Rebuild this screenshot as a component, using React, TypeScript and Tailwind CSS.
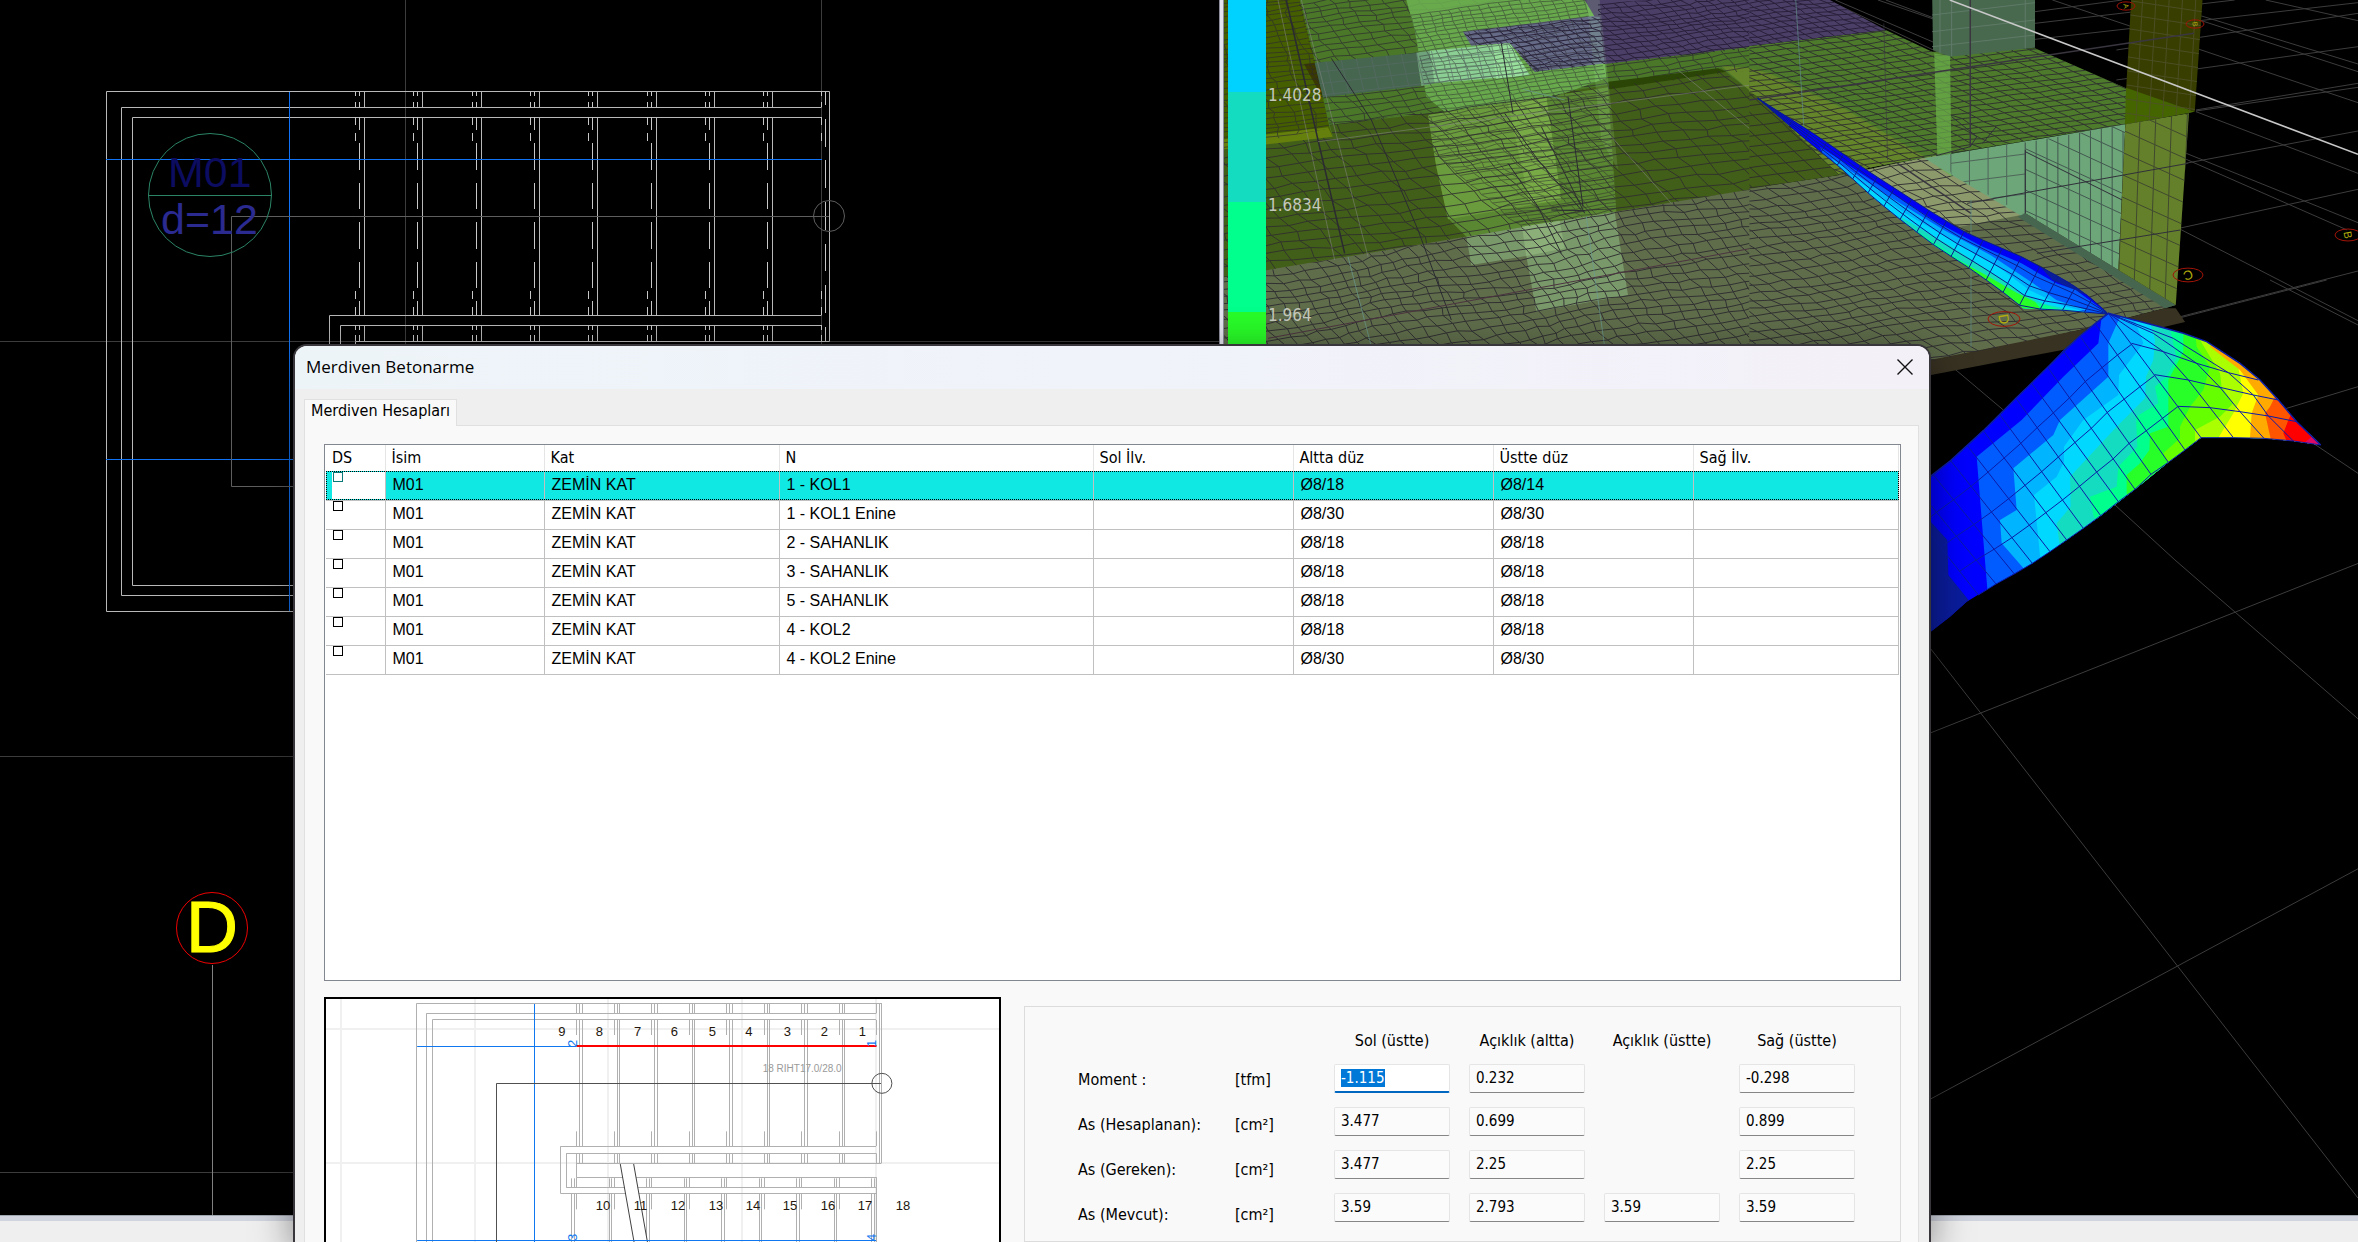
import { useEffect, useRef } from "react";

type Pt = [number, number];

const NEAR = "translate(1218 0) scale(0.33333)";
const FAR = "translate(1750 0) scale(0.38776 0.33333)";
const FLIGHT = "translate(1900 280) scale(0.33333)";
const OPEN = "translate(1910 560) scale(0.33333 0.43495)";

const noise = (a: number, b: number) => {
  const s = Math.sin(a * 127.1 + b * 311.7) * 43758.5453;
  return s - Math.floor(s) - 0.5;
};

type MeshProps = {
  id: string;
  clip: string;
  origin: Pt;
  u: Pt;
  v: Pt;
  nu: number;
  nv: number;
  jitter?: number;
  wave?: number;
  color?: string;
  opacity?: number;
};

/* Finite element grid spanned by two step vectors and cut to a polygon. */
function Mesh({ id, clip, origin, u, v, nu, nv, jitter = 0, wave = 0, color = "#2d2a30", opacity = 0.85 }: MeshProps) {
  const at = (i: number, j: number) => {
    const w = (Math.sin(i * 0.4 + j * 0.25) + Math.sin(i * 0.17 - j * 0.5)) * wave;
    const x = origin[0] + u[0] * i + v[0] * j + noise(i, j) * jitter + w;
    const y = origin[1] + u[1] * i + v[1] * j + noise(j + 9, i + 4) * jitter * 0.5 + w * 0.45;
    return `${x.toFixed(1)} ${y.toFixed(1)}`;
  };
  let d = "";
  for (let j = 0; j <= nv; j++) for (let i = 0; i <= nu; i++) d += `${i ? "L" : "M"}${at(i, j)}`;
  for (let i = 0; i <= nu; i++) for (let j = 0; j <= nv; j++) d += `${j ? "L" : "M"}${at(i, j)}`;
  return (
    <g>
      <clipPath id={id}>
        <polygon points={clip} />
      </clipPath>
      <path d={d} clipPath={`url(#${id})`} fill="none" stroke={color} opacity={opacity} vectorEffect="non-scaling-stroke" />
    </g>
  );
}

const lerp = (a: Pt, b: Pt, t: number): Pt => [a[0] + (b[0] - a[0]) * t, a[1] + (b[1] - a[1]) * t];

const sample = (line: Pt[], n: number): Pt[] => {
  const len = line.slice(1).map((p, i) => Math.hypot(p[0] - line[i][0], p[1] - line[i][1]));
  const total = len.reduce((a, b) => a + b, 0);
  return Array.from({ length: n + 1 }, (_, k) => {
    let rest = (total * k) / n;
    for (let i = 0; i < len.length; i++) {
      if (rest <= len[i] || i === len.length - 1) return lerp(line[i], line[i + 1], Math.min(1, rest / len[i]));
      rest -= len[i];
    }
    return line[line.length - 1];
  });
};

/* Grid between two edge lines that have the same number of nodes. */
function StripMesh({ a, b, m, color }: { a: Pt[]; b: Pt[]; m: number; color: string }) {
  let d = "";
  a.forEach((p, i) => (d += `M${p.join(" ")}L${b[i].join(" ")}`));
  for (let k = 0; k <= m; k++) a.forEach((p, i) => (d += `${i ? "L" : "M"}${lerp(p, b[i], k / m).join(" ")}`));
  return <path d={d} fill="none" stroke={color} strokeWidth={1} vectorEffect="non-scaling-stroke" />;
}

const Poly = ({ p, f, o = 1 }: { p: string; f: string; o?: number }) => <polygon points={p} fill={f} opacity={o} />;
const Line = ({ d, c, w = 1 }: { d: string; c: string; w?: number }) => (
  <path d={d} fill="none" stroke={c} strokeWidth={w} vectorEffect="non-scaling-stroke" />
);

/* ---------- plan view ---------- */

function PlanView() {
  let dashes = "";
  let solids = "";
  const dashA = [[92, 96], [102, 107], [117, 125], [133, 141], [291, 299], [307, 315], [325, 330], [335, 341]];
  const dashB = [[92, 96], [102, 107], [117, 130], [143, 170], [183, 209], [222, 249], [262, 288], [301, 315], [325, 330], [335, 341]];
  const dashEnd = [[92, 105], [119, 147], [160, 188], [202, 230], [244, 271], [285, 313], [327, 341]];
  for (let i = 0; i < 9; i++) {
    const x = Math.round(355 + i * 58.3) + 0.5;
    dashA.forEach(([s, e]) => (dashes += `M${x} ${s}V${e}`));
    (i === 8 ? dashEnd : dashB).forEach(([s, e]) => (dashes += `M${x + 4} ${s}V${e}`));
    if (i < 8) solids += `M${x + 9} 92V107M${x + 9} 117V315M${x + 9} 325V341`;
  }
  return (
    <svg className="h-full w-full" viewBox="0 0 1219 1215" preserveAspectRatio="xMinYMin slice" role="img" aria-label="Kat planı">
      <rect width="1219" height="1215" fill="#000" />
      <path d="M405.5 0V1215M821.5 0V1215M0 341.5H1219M0 756.5H1219M0 1172.5H1219" stroke="#3c3c3c" fill="none" />
      <path
        d="M829.5 341.5V91.5H106.5V611.5H829M821.5 107.5H121.5V595.5H829M821.5 117.5H132.5V585.5H829M821.5 315.5H329.5V400M821.5 325.5H340.5V400M829.5 341.5H355.5V400"
        stroke="#b9b9b9"
        fill="none"
      />
      <path d={solids} stroke="#b9b9b9" fill="none" />
      <path d={dashes} stroke="#c8c8c8" fill="none" />
      <path d="M106 159.5H822M289.5 92V611M106 459.5H820" stroke="#1072f4" fill="none" />
      <path d="M829 216.5H231.5V486.5H700" stroke="#5e5e5e" fill="none" />
      <circle cx="829" cy="216" r="15.5" stroke="#5e5e5e" fill="none" />
      <text x="168" y="187" fontSize="43" fill="#0c0c60" fontFamily="Liberation Sans, sans-serif">M01</text>
      <text x="161" y="234" fontSize="43" fill="#2a2a90" fontFamily="Liberation Sans, sans-serif">d=12</text>
      <circle cx="210" cy="195" r="61.5" stroke="#2b8465" fill="none" />
      <path d="M148 195.5H272" stroke="#2b8465" />
      <circle cx="212" cy="928" r="35.5" stroke="#f00000" fill="none" />
      <text x="186" y="952" fontSize="72" fill="#ffff00" stroke="#ffff00" fontFamily="Liberation Sans, sans-serif">D</text>
      <path d="M212.5 965V1215" stroke="#808080" />
    </svg>
  );
}

/* ---------- analysis view ---------- */

const flightTop: Pt[] = [[20, 295], [170, 405], [300, 510], [480, 645], [560, 700], [700, 770], [820, 845], [870, 885], [920, 937]];
const flightBottom: Pt[] = [[20, 295], [150, 425], [230, 500], [320, 595], [400, 670], [480, 740], [560, 800], [640, 865], [705, 925], [800, 930], [920, 942]];
const lowerA: Pt[] = [
  [625, 100], [585, 130], [540, 168], [490, 212], [443, 262], [395, 310], [348, 355], [300, 405], [250, 452], [202, 497], [152, 542], [100, 585], [50, 625], [10, 660],
];
const lowerB: Pt[] = [
  [903, 473], [855, 510], [805, 547], [753, 583], [705, 628], [655, 665], [602, 707], [550, 745], [500, 780], [450, 815], [397, 850], [343, 882], [288, 912], [235, 945],
];
const outline =
  "50,620 92,588 152,542 250,452 348,355 443,262 540,168 625,100 740,130 850,160 920,185 1020,250 1080,300 1135,360 1190,425 1262,495 1180,483 1092,475 1000,473 903,473 805,547 705,628 602,707 500,780 397,850 288,912 200,965 150,1010 92,1055 50,1090";

const bands: [string, string][] = [
  ["#005cff", "600,60 605,110 595,190 490,290 365,420 230,530 250,780 262,928 262,1100"],
  ["#00b4ff", "665,60 660,110 640,155 625,190 625,290 480,420 460,465 340,565 350,690 300,720 305,790 368,862 440,960"],
  ["#00d8ff", "690,80 715,150 730,190 657,285 655,345 550,420 492,500 492,545 470,590 402,645 420,828 460,900"],
  ["#14dcc0", "740,90 765,180 760,240 738,290 735,355 650,440 510,590 512,680 470,730 478,788 520,900"],
  ["#00ff8c", "800,100 830,235 800,290 765,320 775,370 708,410 712,500 655,560 650,620 570,650 580,705 620,800"],
  ["#28ff28", "850,100 850,215 805,300 805,440 750,460 748,510 720,550 680,585 680,640 700,700"],
  ["#66ff00", "880,100 890,200 930,260 910,330 870,380 840,440 840,475 790,520 805,550 810,600"],
  ["#aaff00", "905,100 900,180 960,280 965,320 1000,370 960,410 885,450 885,480 900,560"],
  ["#ffff00", "1000,180 1020,290 1030,340 1000,400 957,470 960,560"],
  ["#ffaa00", "960,150 930,200 1020,270 1075,345 1055,400 1050,473 1050,560"],
  ["#ff5500", "1130,340 1110,380 1095,400 1112,476 1112,560"],
  ["#ff0000", "1180,390 1165,420 1150,460 1160,483 1170,560"],
  ["#dc0a64", "1250,440 1235,470 1212,490 1212,560"],
];

function AxisMark({ x, y, r, t, turn }: { x: number; y: number; r: number; t: string; turn: number }) {
  return (
    <g>
      <ellipse cx={x} cy={y} rx={r} ry={r * 0.46} stroke="#a01408" fill="none" />
      <text
        x={x}
        y={y}
        transform={`rotate(${turn} ${x} ${y})`}
        textAnchor="middle"
        dominantBaseline="central"
        fontSize={r - 2}
        fill="#b4ac0c"
        fontFamily="Liberation Sans, sans-serif"
      >
        {t}
      </text>
    </g>
  );
}

function AnalysisView() {
  return (
    <svg className="h-full w-full" viewBox="1224 0 1134 1215" preserveAspectRatio="xMinYMin slice" role="img" aria-label="Analiz modeli">
      <rect x="1224" width="1134" height="1215" fill="#000" />

      <g transform={FAR}>
        <Line
          c="#3c3c3c"
          d="M735 70L1250 0M735 118L1568 8M735 35L960 0M945 150L1568 40M945 240L1568 140M1150 330L1568 250M1150 333L1568 262M1100 495L1568 393M850 750L1568 568M1060 965L1568 813M1330 0L1568 62M1030 0L1568 192M1040 15L1568 215M780 0L1568 308M1150 335L1568 520M1125 460L1568 668M1125 478L1540 690M1110 688L1568 962M200 0L500 165M220 0L560 170M350 0L970 270M330 0L480 60"
        />
      </g>
      <g transform={FLIGHT}>
        <Line c="#3c3c3c" d="M1110 0L1374 135M830 116L1280 0M1150 388L1374 320M1240 490L1374 580M150 255L310 390" />
      </g>
      <g transform={OPEN}>
        <Line c="#3c3c3c" d="M60 398L1344 8M610 -130L795 0L1344 365M60 202L1344 1467M60 1240L1344 710" />
      </g>

      <g transform={NEAR}>
        <Poly p="0,0 1600,0 1600,600 0,840" f="#4b7829" />
        <Poly p="0,0 245,0 292,190 335,385 345,410 0,465" f="#465f00" />
        <Poly p="0,420 330,382 345,412 0,465" f="#66800e" />
        <Poly p="0,450 345,410 335,375 640,340 1170,255 1510,205 1600,275 1600,572 0,835" f="#435f19" />
        <Poly p="0,835 1190,635 1600,568 1600,1050 0,1050" f="#606d4c" />
        <Poly p="1510,198 1600,205 1600,275" f="#64852a" />
        <Poly p="258,192 290,188 315,292 300,270" f="#3a3a00" />
        <Mesh id="n1" clip="0,0 1600,0 1600,210 640,340 335,375 240,0" origin={[-100, 60]} u={[48, -7]} v={[12, 16]} nu={42} nv={36} jitter={14} wave={7} opacity={0.7} />
        <Mesh id="n2" clip="0,0 245,0 335,385 0,450" origin={[-160, 10]} u={[58, -7]} v={[6, 15]} nu={12} nv={34} jitter={12} wave={8} opacity={0.65} />
        <Poly p="565,0 1100,0 1150,50 1165,235 1010,290 680,335 625,290 590,90" f="#6fb352" o={0.85} />
        <Poly p="630,345 1170,262 1195,635 745,710 690,655 655,500" f="#5c8832" />
        <Poly p="630,345 985,290 1030,600 690,658 655,500" f="#6c9c3c" />
        <Poly p="870,310 985,290 1030,600 935,612" f="#78aa46" />
        <Poly p="745,710 1190,635 1230,885 955,935 925,768 760,795" f="#7b9a6b" />
        <Poly p="912,680 1025,662 1040,745 925,768" f="#8cb07a" />
        <Poly p="735,95 1150,45 1165,190 950,215 875,130 760,137" f="#666c88" />
        <Poly p="1100,0 1600,-20 1600,140 1160,192 1145,50 1130,50" f="#4d4068" />
        <Poly p="290,188 600,158 608,258 315,292" f="#466650" />
        <Poly p="595,158 640,152 650,250 610,258" f="#70a47c" />
        <Poly p="635,152 875,130 935,225 650,250" f="#8ccf94" />
        <Poly p="820,136 875,130 935,225 835,236" f="#98e09c" />
        <Poly p="1170,245 1500,205 1525,215 1175,268" f="#2b4507" />
        <Poly p="1105,0 1145,0 1200,510 1150,420" f="#b8ffb0" o={0.14} />
        <Mesh id="n3" clip="0,450 345,410 335,375 1170,262 1510,212 1600,275 1600,568 0,835" origin={[-400, 420]} u={[64, -9]} v={[24, 25]} nu={42} nv={32} jitter={20} wave={10} opacity={0.8} />
        <Mesh id="n4" clip="630,345 1170,262 1195,635 745,710 690,655 655,500" origin={[500, 330]} u={[46, -7]} v={[14, 12]} nu={24} nv={44} jitter={12} wave={8} opacity={0.5} />
        <Mesh id="n5" clip="565,0 1100,0 1165,235 1010,290 680,335 625,290 590,90" origin={[450, 60]} u={[30, -4]} v={[6, 12]} nu={32} nv={28} jitter={6} wave={3} opacity={0.5} />
        <Mesh id="n6" clip="0,835 1600,568 1600,1050 0,1050" origin={[-500, 880]} u={[42, -7]} v={[17, 22]} nu={62} nv={36} jitter={17} wave={11} opacity={0.9} />
        <Mesh id="n7" clip="735,95 1140,50 1140,10 1600,-20 1600,145 950,215 875,130 760,137" origin={[700, 70]} u={[32, -4]} v={[16, 12]} nu={36} nv={20} jitter={12} wave={6} color="#241c34" />
        <Mesh id="n8" clip="290,188 875,130 935,225 650,250 315,292" origin={[270, 150]} u={[45, -5]} v={[8, 34]} nu={18} nv={6} color="#5a6a68" opacity={0.6} />
        <Line c="#2a2a30" w={1.5} d="M205 0L300 420L380 760" />
        <Line c="#2a2a30" d="M860 340L960 480L1090 630M970 380L1040 520L1100 640M1000 630L1100 632M900 150L960 215M850 130L885 340M1050 290L1095 620M340 175L460 360L600 690L700 960M870 490L960 620L1030 760" />
        <Line c="#8b8b8b" d="M180 0L350 780M250 0L450 770M300 425L1600 255M1380 210L1600 390M1180 410L1360 610" w={0.5} />
        <Line c="#6a9a90" d="M390 770L460 1040M1105 650L1160 1040M915 268L1040 300" w={0.7} />
        <Line c="#4c3440" d="M150 1015L1600 745" />
      </g>

      <g transform={FAR}>
        <Poly p="-2,565 230,525 480,465 710,640 1098,915 1070,925 850,990 400,1110 -2,1110" f="#606d4c" />
        <Poly p="1070,925 1098,925 1122,966 850,1040 400,1140 400,1095 850,990" f="#383222" />
        <Poly p="300,510 480,465 700,645 540,680 470,640" f="#8c9b6c" />
        <Mesh id="f6" clip="-2,565 230,525 480,465 710,640 1098,915 1070,925 850,990 400,1100 -2,1110" origin={[-700, 660]} u={[42, -7]} v={[26, 21]} nu={60} nv={38} jitter={16} wave={10} opacity={0.9} />
        <Poly p="-2,138 350,90 470,155 735,145 970,265 1145,335 967,373 480,467 320,500 230,525 20,290 -2,280" f="#4e7c2c" />
        <Poly p="-2,205 50,220 250,330 450,470 320,500 230,525 20,290 -2,275" f="#64852a" />
        <Poly p="-2,275 20,290 230,525 -2,566" f="#435f19" />
        <Mesh id="f1" clip="-2,138 350,90 470,155 735,145 970,265 1145,335 967,373 480,467 230,525 20,290 -2,280" origin={[-500, 110]} u={[38, -6]} v={[22, 13]} nu={52} nv={44} jitter={7} wave={2} />
        <Mesh id="f2" clip="-2,275 20,290 230,525 -2,566" origin={[-300, 300]} u={[46, -7]} v={[26, 27]} nu={18} nv={14} jitter={3} />
        <Poly p="-2,0 190,-10 350,90 -2,138" f="#4d4068" />
        <Mesh id="f3" clip="-2,-5 190,-10 350,90 -2,138" origin={[-200, 20]} u={[28, -4]} v={[20, 12]} nu={26} nv={16} jitter={9} wave={4} color="#241c34" />
        <Poly p="470,0 735,0 735,143 515,170 472,150" f="#48694e" />
        <Line c="#5f7a68" d="M470 45L735 8M470 95L735 60M470 140L735 105M490 0V160M520 0V168M710 0V146" />
        <Poly p="475,160 516,168 520,530 484,500" f="#6cb04c" o={0.7} />
        <Poly p="450,475 968,373 950,810 710,640 700,648 520,525" f="#6ea67a" />
        <Mesh id="f4" clip="700,430 968,373 950,810 710,640" origin={[710, 260]} u={[28, 15]} v={[0, 62]} nu={12} nv={9} color="#3b4a48" />
        <Mesh id="f5" clip="500,465 710,425 710,645 520,525" origin={[518, 430]} u={[48, -7]} v={[0, 60]} nu={5} nv={5} color="#4a5a54" />
        <Poly p="710,640 1098,915 1070,925 690,650" f="#466650" />
        <Poly p="983,0 1167,0 1147,335 970,268" f="#393f00" />
        <Poly p="970,263 1147,335 967,373" f="#456600" />
        <Poly p="968,373 1132,340 1098,915 950,810" f="#65802b" />
        <Mesh id="f7" clip="968,373 1132,340 1098,915 950,810" origin={[968, 260]} u={[40, 21]} v={[-2, 66]} nu={6} nv={11} color="#3a4030" />
        <Mesh id="f8" clip="983,0 1167,0 1147,335 967,373" origin={[980, -40]} u={[34, 6]} v={[-2, 42]} nu={7} nv={10} color="#4f522c" />
        <Line c="#3a3640" w={1.5} d="M-2 300L1145 100M568 0V440M380 490L570 640" />
        <Line c="#3a3640" w={0.6} d="M345 70L355 480" />
        <Line c="#30303a" d="M568 440L480 467M635 380L600 430M520 350L585 410L568 440M710 450V640M710 455L960 600M740 760L1110 690M560 610L1130 490" />
        <Line c="#5e8a86" d="M570 600V1040M118 0L140 400" w={0.7} />
        <Line c="#c8c8c8" d="M515 0L1568 463" w={1.5} />
      </g>

      <AxisMark x={2004} y={319} r={16} t="D" turn={80} />
      <AxisMark x={2188} y={275} r={15} t="C" turn={160} />
      <AxisMark x={2348} y={235} r={13} t="B" turn={80} />
      <AxisMark x={2126} y={6} r={9} t="A" turn={80} />
      <AxisMark x={2195} y={24} r={9} t="B" turn={80} />

      <g transform={FAR}>
        <clipPath id="upper-flight">
          <polygon points={[...flightTop, ...[...flightBottom].reverse()].map((p) => p.join(",")).join(" ")} />
        </clipPath>
        <g clipPath="url(#upper-flight)">
          <Poly p="0,250 1000,250 1000,1000 0,1000" f="#0000f4" />
          <Poly p="740,790 820,845 870,885 850,878 780,840" f="#0a1e9c" />
          <Poly p="180,440 300,530 480,665 600,740 700,790 790,850 840,870 920,938 900,950 705,930 400,680 200,500" f="#005cff" />
          <Poly p="210,475 360,590 500,690 620,765 730,850 790,900 870,930 705,930 400,680 230,510" f="#00b4ff" />
          <Poly p="250,520 400,640 520,720 640,800 720,870 800,915 880,940 705,930 310,600" f="#00d8ff" />
          <Poly p="380,645 520,740 640,830 700,880 760,912 850,935 705,930 440,715" f="#14dcc0" />
          <Poly p="420,685 540,780 640,850 700,895 800,928 705,930 500,770" f="#00ff8c" />
          <Poly p="510,765 600,820 690,880 735,905 755,935 705,935 600,850" f="#28ff28" />
        </g>
        <StripMesh a={sample(flightTop, 20)} b={sample(flightBottom, 20)} m={4} color="#0a1c8c" />
      </g>

      <g transform={FLIGHT}>
        <clipPath id="lower-flight">
          <polygon points={outline} />
        </clipPath>
        <g clipPath="url(#lower-flight)">
          <Poly p="0,0 1400,0 1400,1140 0,1140" f="#0000ff" />
          <Poly p="0,640 92,725 142,780 145,885 208,963 208,1100 0,1100" f="#0a1c9c" />
          {bands.map(([fill, edge]) => (
            <Poly key={fill} f={fill} p={`${edge} 1400,1100 1400,0`} />
          ))}
        </g>
        <StripMesh a={lowerA} b={lowerB} m={4} color="#0b1ca8" />
        <Line
          c="#0b1ca8"
          d="M695 190L790 215L890 250L985 278L1075 300M764 284L865 300L960 322L1060 345L1135 360M833 379L930 383L1020 395L1105 408L1190 425M903 473L1000 473L1092 475L1180 483L1262 495M625 100L790 215L865 300L930 383L1000 473M625 100L760 160L890 250L960 322L1020 395L1092 475M625 100L820 175L985 278L1060 345L1105 408L1180 483"
        />
        <Line
          c="#0b1ca8"
          w={1.5}
          d="M92 588L152 542L250 452L348 355L443 262L540 168L625 100L740 130L850 160L920 185L1020 250L1080 300L1135 360L1190 425L1262 495"
        />
      </g>

      <g>
        <rect x="1228" y="0" width="38" height="92" fill="#00d2ff" />
        <rect x="1228" y="92" width="38" height="110" fill="#14dcc0" />
        <rect x="1228" y="202" width="38" height="110" fill="#00ff8c" />
        <rect x="1228" y="312" width="38" height="110" fill="#28fa28" />
        <g fontSize="17" fill="#c4c8bc" fontFamily="DejaVu Sans Condensed, DejaVu Sans, sans-serif">
          <text x="1268" y="101">1.4028</text>
          <text x="1268" y="211">1.6834</text>
          <text x="1268" y="321">1.964</text>
        </g>
      </g>
    </svg>
  );
}

/* ---------- dialog: section preview ---------- */

const sx = (v: number) => 310 + v / 2.24;
const sy = (v: number) => 960 + v / 3;
const cx = (v: number) => Math.floor(sx(v)) + 0.5;
const cy = (v: number) => Math.floor(sy(v)) + 0.5;
const hl = (y: number, a: number, b: number) => `M${sx(a)} ${cy(y)}H${sx(b)}`;
const vl = (x: number, a: number, b: number) => `M${cx(x)} ${sy(a)}V${sy(b)}`;

function StairPreview() {
  let steps = "";
  for (let i = 0; i < 9; i++) {
    const a = 597 + i * 84;
    steps += vl(a, 130, 160) + vl(a, 180, 225) + vl(a, 514, 558) + vl(a, 580, 609);
    if (i < 8) for (const o of [7, 13]) steps += vl(a + o, 130, 160) + vl(a + o, 180, 558) + vl(a + o, 580, 609);
    steps += vl(a, 652, 683) + vl(a, 700, 748);
    for (const o of [11, 5]) steps += vl(a - o, 655, 683) + vl(a - o, 700, 900);
  }
  const top: [string, number][] = [["9", 556], ["8", 640], ["7", 726], ["6", 808], ["5", 893], ["4", 975], ["3", 1061], ["2", 1144], ["1", 1229]];
  const low: [string, number][] = [["10", 640], ["11", 725], ["12", 808], ["13", 893], ["14", 976], ["15", 1059], ["16", 1144], ["17", 1227], ["18", 1312]];
  const side: [string, number, number][] = [["2", 597, 261], ["1", 1268, 261], ["3", 597, 843], ["4", 1268, 843]];
  return (
    <svg className="h-full w-full" viewBox="326 999 673 243" preserveAspectRatio="xMinYMin slice" role="img" aria-label="Merdiven kesiti">
      <path
        d={[69, 369, 668, 968, 1268].map((x) => `M${Math.round(sx(x))} 990V1300`).join("") + "M326 1029H999M326 1163H999"}
        stroke="#f0f0f0"
        strokeWidth="2"
      />
      <path
        d={
          hl(130, 239, 1281) + hl(160, 261, 1268) + hl(178, 275, 1268) + vl(239, 130, 900) + vl(261, 160, 900) + vl(275, 178, 900) +
          vl(1280, 130, 609) + vl(1275, 130, 609) + hl(559, 561, 1268) + hl(580, 574, 1268) + hl(609, 597, 1280) + vl(561, 559, 700) +
          vl(574, 580, 683) + vl(597, 609, 652) + hl(652, 597, 1268) + hl(683, 574, 1268) + hl(700, 561, 1268) + vl(1268, 652, 900)
        }
        stroke="#b0b0b0"
        fill="none"
      />
      <path d={steps} stroke="#b0b0b0" fill="none" />
      <polygon points={`${sx(696)},${sy(613)} ${sx(725)},${sy(613)} ${sx(763)},${sy(900)} ${sx(733)},${sy(900)}`} fill="#fff" />
      <path d={`M${sx(695)} ${sy(612)}L${sx(733)} ${sy(900)}M${sx(725)} ${sy(612)}L${sx(763)} ${sy(900)}`} stroke="#404040" />
      <path d={vl(503, 132, 900) + hl(259, 240, 597) + hl(841, 240, 1268)} stroke="#0f78f0" fill="none" />
      <path d={`M${sx(597)} 1046H${sx(1269)}`} stroke="#ff0000" strokeWidth="2" />
      <path d={vl(418, 370, 900) + hl(370, 418, 1279)} stroke="#505050" fill="none" />
      <circle cx={sx(1281)} cy={sy(370)} r="10" stroke="#505050" fill="none" />
      <g fontSize="13" fill="#24160c" fontFamily="Liberation Sans, sans-serif">
        {top.map(([t, x]) => (
          <text key={t} x={sx(x)} y="1036">{t}</text>
        ))}
        {low.map(([t, x]) => (
          <text key={t} x={sx(x)} y="1210">{t}</text>
        ))}
      </g>
      <text x={sx(1014)} y="1072" fontSize="10" fill="#9a9a9a" fontFamily="Liberation Sans, sans-serif">18 RIHT17.0/28.0</text>
      <g fontSize="13" fill="#0f78f0" fontFamily="Liberation Sans, sans-serif">
        {side.map(([t, x, y]) => (
          <text key={t} x={sx(x)} y={sy(y)} transform={`rotate(-90 ${sx(x)} ${sy(y)})`}>{t}</text>
        ))}
      </g>
    </svg>
  );
}

/* ---------- dialog ---------- */

const columns = ["DS", "İsim", "Kat", "N", "Sol İlv.", "Altta düz", "Üstte düz", "Sağ İlv."];
const rows = [
  ["M01", "ZEMİN KAT", "1 - KOL1", "", "Ø8/18", "Ø8/14", ""],
  ["M01", "ZEMİN KAT", "1 - KOL1 Enine", "", "Ø8/30", "Ø8/30", ""],
  ["M01", "ZEMİN KAT", "2 - SAHANLIK", "", "Ø8/18", "Ø8/18", ""],
  ["M01", "ZEMİN KAT", "3 - SAHANLIK", "", "Ø8/18", "Ø8/18", ""],
  ["M01", "ZEMİN KAT", "5 - SAHANLIK", "", "Ø8/18", "Ø8/18", ""],
  ["M01", "ZEMİN KAT", "4 - KOL2", "", "Ø8/18", "Ø8/18", ""],
  ["M01", "ZEMİN KAT", "4 - KOL2 Enine", "", "Ø8/30", "Ø8/30", ""],
];

function ResultTable() {
  return (
    <div className="h-[537px] border border-[#828790] bg-white px-px">
      <table className="w-full table-fixed border-collapse text-left">
        <colgroup>
          <col className="w-[59px]" />
          <col className="w-[159px]" />
          <col className="w-[235px]" />
          <col className="w-[314px]" />
          <col className="w-[200px]" />
          <col className="w-[200px]" />
          <col className="w-[200px]" />
          <col />
        </colgroup>
        <thead>
          <tr className="h-[26px]">
            {columns.map((c) => (
              <th key={c} scope="col" className="border-r border-[#e5e5e5] p-0 pl-1.5 leading-5 font-normal">{c}</th>
            ))}
          </tr>
        </thead>
        <tbody className="font-['Liberation_Sans',sans-serif]">
          {rows.map((r, i) => (
            <tr key={i} className={i === 0 ? "h-[29px] bg-[#10e8e4] outline-1 -outline-offset-1 outline-dotted outline-black" : "h-[29px]"}>
              <td className="h-[29px] border-r border-b border-[#c0c0c0] p-0">
                <div className={i === 0 ? "ml-1.5 flex h-[27px] bg-white" : "ml-1.5 flex h-[27px]"}>
                  <input
                    type="checkbox"
                    aria-label={`DS ${r[2]}`}
                    className={
                      i === 0
                        ? "ml-px size-2.5 appearance-none border border-[#0a7a78] bg-white"
                        : "ml-px size-2.5 appearance-none border border-black bg-white"
                    }
                  />
                </div>
              </td>
              {r.map((c, j) => (
                <td key={j} className="border-r border-b border-[#c0c0c0] p-0 pb-px pl-[7px] leading-5">{c}</td>
              ))}
            </tr>
          ))}
        </tbody>
      </table>
    </div>
  );
}

const fieldColumns = ["Sol (üstte)", "Açıklık (altta)", "Açıklık (üstte)", "Sağ (üstte)"];
const fields = [
  { id: "moment", label: "Moment :", unit: "[tfm]", values: ["-1.115", "0.232", null, "-0.298"] },
  { id: "as-hesaplanan", label: "As (Hesaplanan):", unit: "[cm²]", values: ["3.477", "0.699", null, "0.899"] },
  { id: "as-gereken", label: "As (Gereken):", unit: "[cm²]", values: ["3.477", "2.25", null, "2.25"] },
  { id: "as-mevcut", label: "As (Mevcut):", unit: "[cm²]", values: ["3.59", "2.793", "3.59", "3.59"] },
];

function SectionValues() {
  const first = useRef<HTMLInputElement>(null);
  useEffect(() => {
    first.current?.focus();
    first.current?.select();
  }, []);
  return (
    <fieldset className="mt-[9px] flex min-w-0 flex-1 border border-[#dcdcdc] pl-[53px]">
      <div className="mt-[50px] w-[157px]">
        {fields.map((f) => (
          <label key={f.id} htmlFor={`${f.id}-0`} className="flex h-[45px] items-center whitespace-nowrap">{f.label}</label>
        ))}
      </div>
      <div className="mt-[50px] w-[99px]">
        {fields.map((f) => (
          <div key={f.id} className="flex h-[45px] items-center">{f.unit}</div>
        ))}
      </div>
      <div className="mt-6">
        <div className="grid grid-cols-[repeat(4,116px)] gap-x-[19px] text-center leading-5">
          {fieldColumns.map((c) => (
            <div key={c} className="whitespace-nowrap">{c}</div>
          ))}
        </div>
        <div className="mt-[13px] grid grid-cols-[repeat(4,116px)] gap-x-[19px] gap-y-3.5">
          {fields.map((f) =>
            f.values.map((v, i) =>
              v === null ? (
                <span key={`${f.id}${i}`} />
              ) : (
                <input
                  key={`${f.id}${i}`}
                  id={`${f.id}-${i}`}
                  ref={f.id === "moment" && i === 0 ? first : undefined}
                  aria-label={`${f.label} ${fieldColumns[i]}`}
                  defaultValue={v}
                  className="h-[29px] w-full rounded-xs border border-[#e5e5e5] border-b-[#868686] bg-[#fbfbfb] px-1.5 pb-0.5 text-[15px] leading-5 outline-none selection:bg-[#0078d7] selection:text-white focus:border-b-2 focus:border-b-[#0067c0] focus:bg-white focus:pb-px"
                />
              ),
            ),
          )}
        </div>
      </div>
    </fieldset>
  );
}

function StairDialog() {
  return (
    <section
      role="dialog"
      aria-labelledby="dialog-title"
      className="absolute top-[346px] right-[429px] bottom-0 left-[295px] flex flex-col rounded-t-xl bg-[#efefef] shadow-[0_0_0_2px_#38363a,0_10px_40px_rgba(0,0,0,0.5)]"
    >
      <header className="flex h-[43px] items-center justify-between rounded-t-xl bg-linear-to-r from-[#edf4f8] via-[#f0f3fa] to-[#f4f0f8] pr-4 pb-0.5 pl-[11px]">
        <h1 id="dialog-title" className="font-['Open_Sans',sans-serif] text-[17px]">Merdiven Betonarme</h1>
        <button type="button" aria-label="Kapat" className="flex size-4 items-center justify-center">
          <svg viewBox="0 0 16 16" className="size-4" fill="none" stroke="#111" strokeWidth="1.4">
            <path d="M0.5 0.5L15.5 15.5M15.5 0.5L0.5 15.5" />
          </svg>
        </button>
      </header>
      <div role="tablist" className="mt-2.5 ml-[9px] flex">
        <button type="button" role="tab" aria-selected="true" className="z-10 -mb-px h-[27px] border border-b-0 border-[#e0e0e0] bg-[#f9f9f9] px-1.5 pb-1 leading-5 whitespace-nowrap">
          Merdiven Hesapları
        </button>
      </div>
      <div role="tabpanel" className="mr-[10px] ml-[9px] flex min-h-0 flex-1 flex-col border border-b-0 border-[#e0e0e0] bg-[#f9f9f9] pt-[18px] pr-[17px] pl-[19px]">
        <ResultTable />
        <div className="mt-4 flex min-h-0 flex-1 gap-[23px]">
          <div className="w-[677px] overflow-hidden border-2 border-b-0 border-black bg-white">
            <StairPreview />
          </div>
          <SectionValues />
        </div>
      </div>
    </section>
  );
}

export default function App() {
  return (
    <main className="relative flex h-screen w-full flex-col overflow-hidden bg-[#efefef] font-['DejaVu_Sans_Condensed','DejaVu_Sans',sans-serif] text-[16px] text-black">
      <div className="flex min-h-0 flex-1">
        <div className="min-w-0 flex-[1219] overflow-hidden bg-black">
          <PlanView />
        </div>
        <div className="w-[5px] border-x border-[#8c8c9c] bg-[#e4e4ee]" />
        <div className="min-w-0 flex-[1134] overflow-hidden bg-black">
          <AnalysisView />
        </div>
      </div>
      <footer className="h-[27px]">
        <div className="h-1.5 border-t border-[#a0a6b0] bg-[#d0d4de]" />
      </footer>
      <StairDialog />
    </main>
  );
}
